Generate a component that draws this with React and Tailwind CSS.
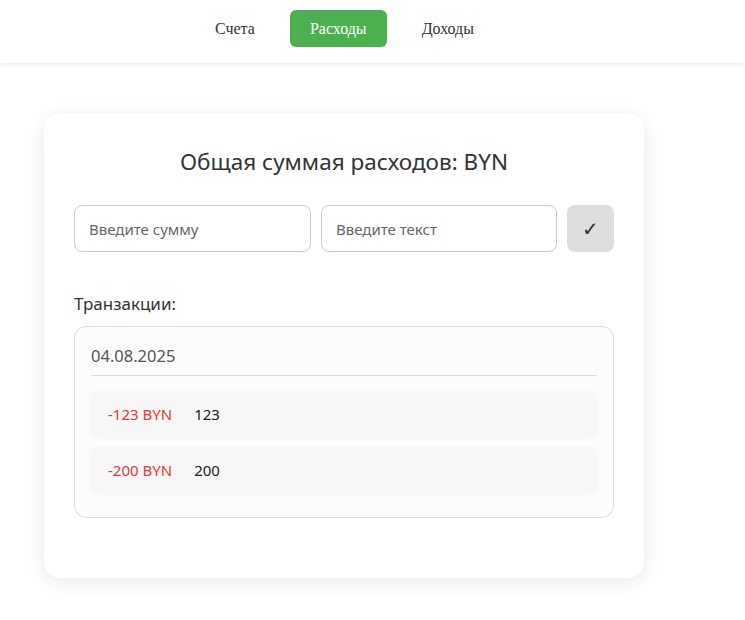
import React from "react";

function App() {
  const transactions = [
    { id: 1, amount: "-123 BYN", text: "123" },
    { id: 2, amount: "-200 BYN", text: "200" },
  ];

  return (
    <div className="min-h-screen bg-white font-['Noto_Sans',sans-serif] text-[#333]">
      {/* Nav */}
      <nav className="h-[63px] bg-white shadow-[0_2px_5px_rgba(0,0,0,0.08)] flex items-start pl-[195px] pt-[10px] gap-[15px] font-['Liberation_Serif',serif] text-[16px]">
        <button className="h-[37px] px-[20px] text-[#333]">Счета</button>
        <button className="h-[37px] px-[20px] rounded-[6px] bg-[#4caf50] text-white">Расходы</button>
        <button className="h-[37px] px-[20px] text-[#333]">Доходы</button>
      </nav>

      {/* Card */}
      <div className="pt-[50px] pl-[44px]">
        <div className="w-[600px] bg-white rounded-[16px] shadow-[0_4px_20px_rgba(0,0,0,0.09)] px-[30px] pt-[32px] pb-[60px]">
          <h2 className="text-center text-[22.5px] leading-[34px] text-[#333]">
            Общая суммая расходов: BYN
          </h2>

          <div className="flex gap-[10px] mt-[26px]">
            <input
              className="w-[237px] h-[47px] border border-[#ccc] rounded-[8px] px-[14px] text-[15px] placeholder:text-[#666] outline-none"
              placeholder="Введите сумму"
            />
            <input
              className="w-[236px] h-[47px] border border-[#ccc] rounded-[8px] px-[14px] text-[15px] placeholder:text-[#666] outline-none"
              placeholder="Введите текст"
            />
            <button className="w-[47px] h-[47px] rounded-[8px] bg-[#ddd] text-[#333] text-[20px]">✓</button>
          </div>

          <h3 className="mt-[40px] text-[17px] leading-[24px] text-[#333]">Транзакции:</h3>

          <div className="mt-[10px] border border-[#ddd] rounded-[12px] bg-[#fcfcfc] px-[16px] pt-[16px] pb-[24px]">
            <div className="text-[16.5px] leading-[26px] text-[#555] pb-[6px] border-b border-[#ddd]">04.08.2025</div>
            <div className="flex flex-col gap-[10px] mt-[15px]">
              {transactions.map((t) => (
                <div
                  key={t.id}
                  className="h-[46px] flex items-center gap-[22px] px-[17px] rounded-[8px] bg-[#f7f7f7] shadow-[0_1px_4px_rgba(0,0,0,0.04)] text-[15px]"
                >
                  <span className="text-[#e53935]">{t.amount}</span>
                  <span className="text-[#222]">{t.text}</span>
                </div>
              ))}
            </div>
          </div>
        </div>
      </div>
    </div>
  );
}

export default App;
